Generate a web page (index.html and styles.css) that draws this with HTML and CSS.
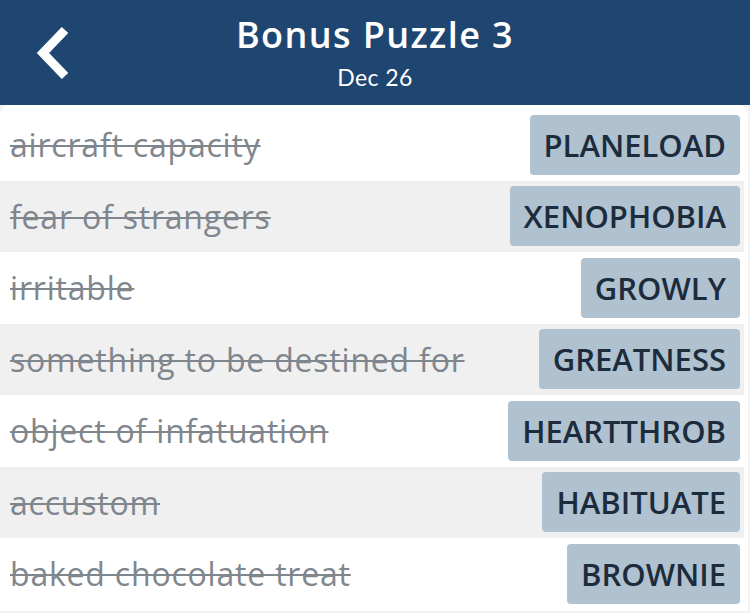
FILE: index.html
```html
<html lang="en">
<head>
    <meta charset="UTF-8">
    <meta name="viewport" content="width=device-width, initial-scale=1.0">
    <title>Bonus Puzzle 3</title>
    <link rel="stylesheet" href="styles.css">
</head>
<body>
    <div class="header">
        <a class="back" href="#">
            <svg width="40" height="56" viewBox="0 0 40 56">
                <path d="M30 4 L8 27 L30 50" fill="none" stroke="#fff" stroke-width="9" stroke-linecap="butt" stroke-linejoin="miter"/>
            </svg>
        </a>
        <div class="title">Bonus Puzzle 3</div>
        <div class="date">Dec 26</div>
    </div>
    <div class="panel">
        <div class="row">
            <span class="clue">aircraft capacity</span>
            <span class="answer">PLANELOAD</span>
        </div>
        <div class="row alt">
            <span class="clue">fear of strangers</span>
            <span class="answer">XENOPHOBIA</span>
        </div>
        <div class="row">
            <span class="clue">irritable</span>
            <span class="answer">GROWLY</span>
        </div>
        <div class="row alt">
            <span class="clue">something to be destined for</span>
            <span class="answer">GREATNESS</span>
        </div>
        <div class="row">
            <span class="clue">object of infatuation</span>
            <span class="answer">HEARTTHROB</span>
        </div>
        <div class="row alt">
            <span class="clue">accustom</span>
            <span class="answer">HABITUATE</span>
        </div>
        <div class="row">
            <span class="clue">baked chocolate treat</span>
            <span class="answer">BROWNIE</span>
        </div>
    </div>
</body>
</html>
```

FILE: styles.css
```css
body {
    margin: 0;
    background-color: #f3f3f3;
    font-family: "Open Sans", Lato, sans-serif;
    height: 613px;
    overflow: hidden;
}
.header {
    background-color: #1f4670;
    color: white;
    height: 105px;
    position: relative;
    text-align: center;
    box-sizing: border-box;
    padding-top: 12px;
}
.back {
    position: absolute;
    left: 35px;
    top: 26px;
}
.title {
    font-size: 36px;
    font-weight: 600;
    letter-spacing: 1.4px;
    line-height: 46px;
}
.date {
    font-family: Lato, sans-serif;
    font-size: 23px;
    letter-spacing: 0.4px;
    line-height: 30px;
    margin-top: 4px;
}
.panel {
    background: white;
    margin: -1px 2px 0 0;
    border-radius: 12px 12px 0 0;
    padding-top: 5px;
    height: 502px;
}
.row {
    height: 71.5px;
    display: flex;
    align-items: center;
    justify-content: space-between;
    padding: 0 4px 0 10px;
    margin-right: 4px;
}
.row.alt {
    background-color: #f0f0f0;
}
.clue {
    font-size: 32px;
    letter-spacing: 0.8px;
    color: #7f868d;
    text-decoration: line-through;
    text-decoration-thickness: 2px;
}
.answer {
    background-color: #b0c1d0;
    color: #1c2c3c;
    font-size: 31px;
    font-weight: 600;
    height: 60px;
    line-height: 60px;
    padding: 0 14px;
    border-radius: 4px;
}
```
